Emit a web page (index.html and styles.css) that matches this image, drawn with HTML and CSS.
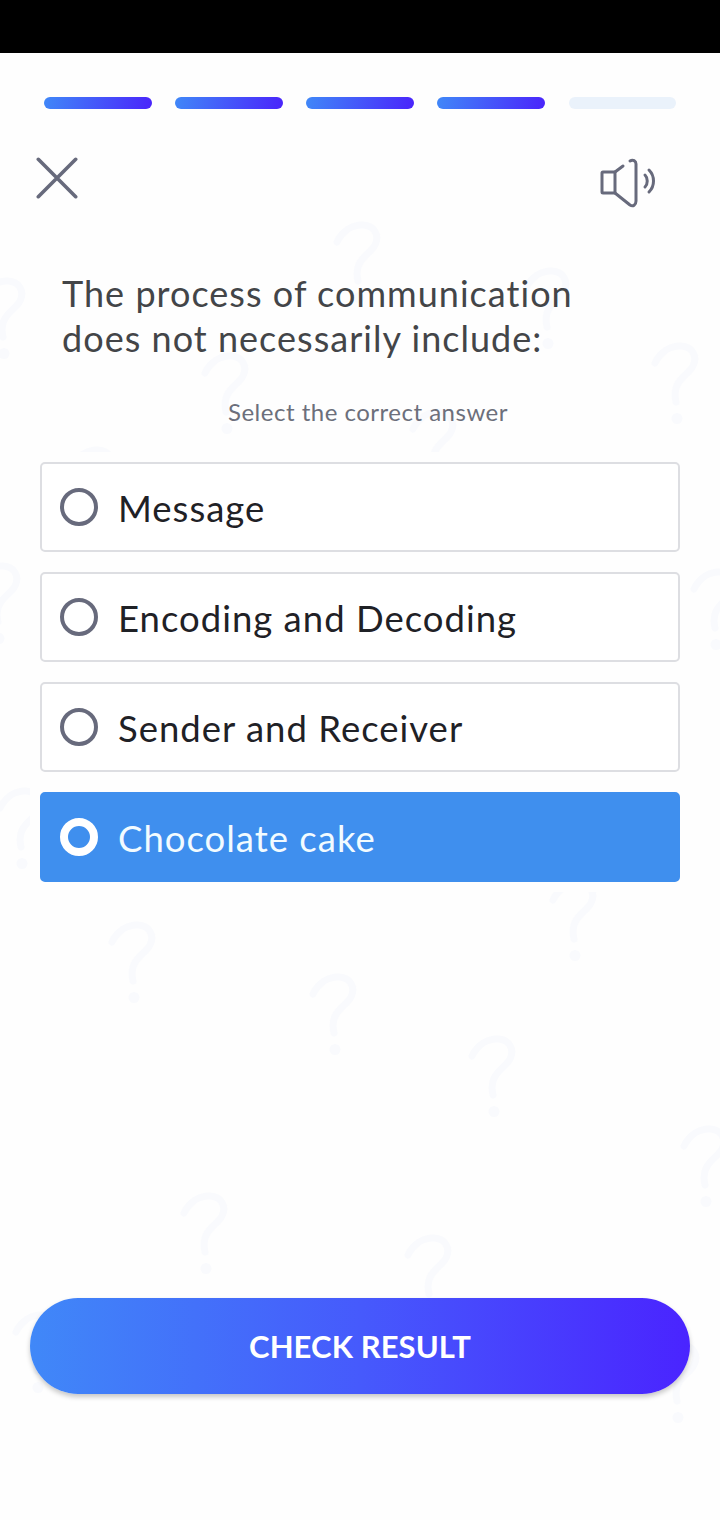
FILE: index.html
```html
<!DOCTYPE html>
<html lang="en">
<head>
    <meta charset="UTF-8">
    <meta name="viewport" content="width=device-width, initial-scale=1.0">
    <title>Quiz</title>
    <link rel="stylesheet" href="styles.css">
</head>
<body>

<!-- faint background pattern -->
<svg class="pattern" viewBox="0 0 720 1520" aria-hidden="true">
    <defs>
        <g id="mark">
            <path d="M4 21C10 9 20 4 29 4C41 4 47 14 42 24C37 34 20 38 25 60"/>
            <circle class="dot" cx="26" cy="76.5" r="5.5"/>
        </g>
    </defs>
    <use href="#mark" x="333" y="221"/>
    <use href="#mark" x="522" y="267"/>
    <use href="#mark" x="-22" y="277"/>
    <use href="#mark" x="651" y="342"/>
    <use href="#mark" x="201" y="352"/>
    <use href="#mark" x="409" y="408"/>
    <use href="#mark" x="68" y="446"/>
    <use href="#mark" x="-27" y="562"/>
    <use href="#mark" x="690" y="568"/>
    <use href="#mark" x="-4" y="787"/>
    <use href="#mark" x="549" y="879"/>
    <use href="#mark" x="108" y="921"/>
    <use href="#mark" x="309" y="973"/>
    <use href="#mark" x="468" y="1035"/>
    <use href="#mark" x="680" y="1125"/>
    <use href="#mark" x="180" y="1192"/>
    <use href="#mark" x="404" y="1234"/>
    <use href="#mark" x="12" y="1311"/>
    <use href="#mark" x="652" y="1341"/>
</svg>

<div class="screen">
    <div class="status-bar"></div>

    <div class="progress">
        <span class="step done"></span>
        <span class="step done"></span>
        <span class="step done"></span>
        <span class="step done"></span>
        <span class="step"></span>
    </div>

    <div class="toolbar">
        <button class="icon-btn" aria-label="Close">
            <svg width="42" height="42" viewBox="0 0 42 42">
                <path d="M2.3 2.3L39.7 39.7M39.7 2.3L2.3 39.7"/>
            </svg>
        </button>
        <button class="icon-btn" aria-label="Play sound">
            <svg class="speaker" width="58" height="52" viewBox="0 0 58 52">
                <path d="M16 15H4Q3 15 3 16V35Q3 36 4 36H16Z"/>
                <path d="M16 15L24 9M31 4C34 2 37 4 37 7V44C37 48 34 50 31 48L16 36"/>
                <path d="M46 18C49 21 49 27 46 30M50 13C56 19 56 29 50 35"/>
            </svg>
        </button>
    </div>

    <h1 class="question">The process of communication<br>does not necessarily include:</h1>
    <p class="hint">Select the correct answer</p>

    <div class="answers">
        <button class="answer"><span class="radio"></span><span class="label">Message</span></button>
        <button class="answer"><span class="radio"></span><span class="label">Encoding and Decoding</span></button>
        <button class="answer"><span class="radio"></span><span class="label">Sender and Receiver</span></button>
        <button class="answer selected"><span class="radio"></span><span class="label">Chocolate cake</span></button>
    </div>

    <button class="check-btn">CHECK RESULT</button>
</div>

</body>
</html>
```

FILE: styles.css
```css
body {
    margin: 0;
    background-color: #fefefe;
    font-family: Lato, 'Liberation Sans', sans-serif;
}
button {
    font-family: inherit;
    margin: 0;
    border: none;
    cursor: pointer;
}
.pattern {
    position: absolute;
    top: 0;
    left: 0;
    width: 720px;
    height: 1520px;
    fill: none;
    stroke: #f9fafd;
    stroke-width: 7;
    stroke-linecap: round;
}
.dot {
    fill: #f9fafd;
    stroke: none;
}
.screen {
    position: relative;
    display: flex;
    flex-direction: column;
    width: 720px;
    height: 1520px;
    overflow: hidden;
}
.status-bar {
    height: 53px;
    background: #000;
}
.progress {
    display: flex;
    gap: 23.6px;
    margin: 44px 44px 0;
}
.step {
    flex: 1;
    height: 12px;
    border-radius: 6px;
    background: #eaf2fb;
}
.step.done {
    background: linear-gradient(105deg, #4088f8, #4a24fb);
}
.toolbar {
    display: flex;
    justify-content: space-between;
    align-items: flex-start;
    height: 52px;
    padding: 48px 63px 0 36px;
}
.icon-btn {
    padding: 0;
    background: none;
    line-height: 0;
}
.icon-btn svg {
    fill: none;
    stroke: #676a7c;
    stroke-width: 3.6;
    stroke-linecap: round;
    stroke-linejoin: round;
}
.icon-btn .speaker {
    stroke-width: 3;
}
.question {
    margin: 62px 62px 0;
    color: #434548;
    font-size: 36px;
    font-weight: 400;
    line-height: 45px;
    letter-spacing: 1.03px;
}
.hint {
    margin: 35px 0 0 16px;
    color: #6c6f7b;
    font-size: 24px;
    line-height: 32px;
    letter-spacing: 0.5px;
    text-align: center;
}
.answers {
    display: flex;
    flex-direction: column;
    gap: 20px;
    margin: 24px 30px 0;
    padding: 10px;
    background: #fefefe;
}
.answer {
    display: flex;
    align-items: center;
    gap: 20px;
    height: 90px;
    padding: 0 18px;
    border: 2px solid #dddee2;
    border-radius: 5px;
    background: #fff;
    color: #1f2126;
    font-size: 36.5px;
    letter-spacing: 1px;
}
.answer.selected {
    border-color: #3f8fee;
    background: #3f8fee;
    color: #f2fbff;
}
.radio {
    box-sizing: border-box;
    width: 38px;
    height: 38px;
    border: 4px solid #676a7c;
    border-radius: 50%;
}
.selected .radio {
    border: 8px solid #fff;
}
.label {
    padding-top: 2px;
}
.check-btn {
    height: 96px;
    margin: 406px 30px 0;
    border-radius: 48px;
    background: linear-gradient(90deg, #4088f8, #465afc 50%, #4a24ff);
    box-shadow: 0 3px 5px rgba(0, 0, 0, 0.22);
    color: #fff;
    font-size: 31px;
    font-weight: 700;
    letter-spacing: 0.1px;
}
```
